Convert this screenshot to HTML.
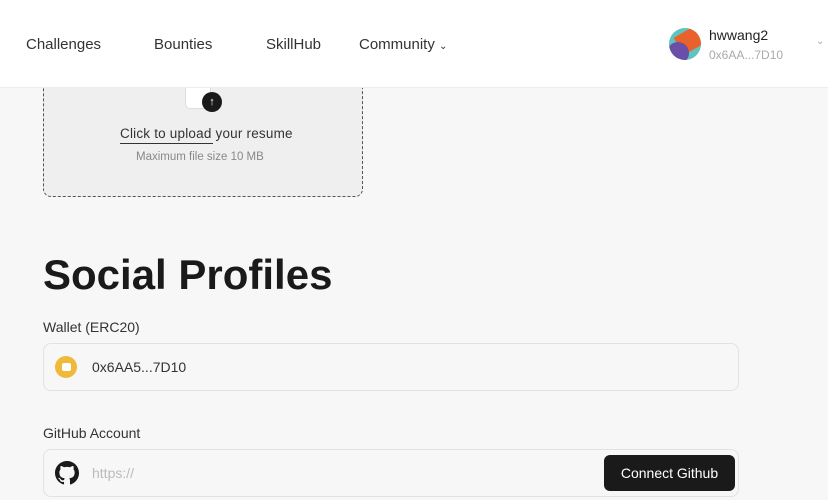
<!DOCTYPE html>
<html><head><style>
*{box-sizing:border-box;margin:0;padding:0}
body{width:828px;height:500px;overflow:hidden;background:#f7f7f7;font-family:"Liberation Sans",sans-serif;color:#1d1d1d;position:relative}
.hdr{position:absolute;left:0;top:0;width:828px;height:88px;background:#fff;border-bottom:1px solid #ececec}
.nav{position:absolute;top:35px;font-size:15px;color:#333}
.abs{position:absolute}
.upload{position:absolute;left:43px;top:70px;width:320px;height:127px;border:1px dashed #555;border-radius:8px;background:#efefef}
.field{position:absolute;left:43px;width:696px;height:48px;border:1px solid #e2e2e2;border-radius:8px;background:#f7f7f7}
</style></head><body>
<div class="upload"></div>
<div class="abs" style="left:185px;top:88px;width:26px;height:21px;background:#fff;border:1px solid #ddd;border-top:none;border-radius:0 0 5px 5px"></div>
<div class="abs" style="left:202px;top:92px;width:20px;height:20px;border-radius:50%;background:#1a1a1a;color:#fff;font-size:11px;text-align:center;line-height:20px">↑</div>
<div class="abs" style="left:120px;top:126px;font-size:13.5px;color:#333;letter-spacing:0.2px">Click to upload your resume</div>
<div class="abs" style="left:120px;top:143px;width:93px;height:1px;background:#333"></div>
<div class="abs" style="left:136px;top:151px;font-size:11.5px;color:#888">Maximum file size 10 MB</div>
<div class="hdr">
<div class="nav" style="left:26px;top:36px">Challenges</div>
<div class="nav" style="left:154px;top:36px">Bounties</div>
<div class="nav" style="left:266px;top:36px">SkillHub</div>
<div class="nav" style="left:359px;top:36px">Community <span style="font-size:10px">⌄</span></div>
<div class="abs" style="left:669px;top:28px;width:32px;height:32px;border-radius:50%;background:#5fc3c0;overflow:hidden"><div class="abs" style="left:8px;top:2px;width:26px;height:20px;background:#e9622b;transform:rotate(-30deg)"></div><div class="abs" style="left:-2px;top:14px;width:22px;height:22px;border-radius:50%;background:#6a4ea8"></div></div>
<div class="abs" style="left:709px;top:27px;font-size:14px;color:#222">hwwang2</div>
<div class="abs" style="left:709px;top:48px;font-size:12px;color:#aaa">0x6AA...7D10</div>
<div class="abs" style="left:816px;top:36px;font-size:10px;color:#aaa">⌄</div>
</div>
<div class="abs" style="left:43px;top:251px;font-size:42px;font-weight:bold;color:#1a1a1a">Social Profiles</div>
<div class="abs" style="left:43px;top:319px;font-size:14px;color:#333">Wallet (ERC20)</div>
<div class="field" style="top:343px"></div>
<div class="abs" style="left:55px;top:356px;width:22px;height:22px;border-radius:50%;background:#f0b93a"><div class="abs" style="left:7px;top:7px;width:9px;height:8px;background:#fff;border-radius:2px"></div></div>
<div class="abs" style="left:92px;top:359px;font-size:14px;color:#333">0x6AA5...7D10</div>
<div class="abs" style="left:43px;top:425px;font-size:14px;color:#333">GitHub Account</div>
<div class="field" style="top:449px"></div>
<svg class="abs" style="left:55px;top:461px" width="24" height="24" viewBox="0 0 16 16"><path fill="#1a1a1a" d="M8 0C3.58 0 0 3.580 0 8c0 3.540 2.290 6.530 5.470 7.590.4.07.55-.17.55-.38v-1.330c-2.230.48-2.700-1.070-2.700-1.070-.36-.92-.89-1.170-.89-1.170-.73-.5.06-.49.06-.49.8.06 1.230.83 1.230.83.72 1.220 1.870.87 2.330.66.07-.52.28-.87.5-1.070-1.780-.2-3.640-.89-3.640-3.950 0-.87.31-1.590.82-2.150-.08-.2-.36-1.020.08-2.120 0 0 .67-.21 2.200.82a7.600 7.600 0 0 1 4 0c1.530-1.040 2.200-.82 2.200-.82.44 1.100.16 1.920.08 2.120.51.56.82 1.270.82 2.150 0 3.070-1.870 3.750-3.650 3.950.29.25.54.73.54 1.480v2.200c0 .21.15.46.55.38A8 8 0 0 0 16 8c0-4.420-3.580-8-8-8z"/></svg>
<div class="abs" style="left:92px;top:465px;font-size:14px;color:#bbb">https://</div>
<div class="abs" style="left:604px;top:455px;width:131px;height:36px;background:#1a1a1a;border-radius:6px;color:#fff;font-size:14px;text-align:center;line-height:36px">Connect Github</div>
</body></html>
